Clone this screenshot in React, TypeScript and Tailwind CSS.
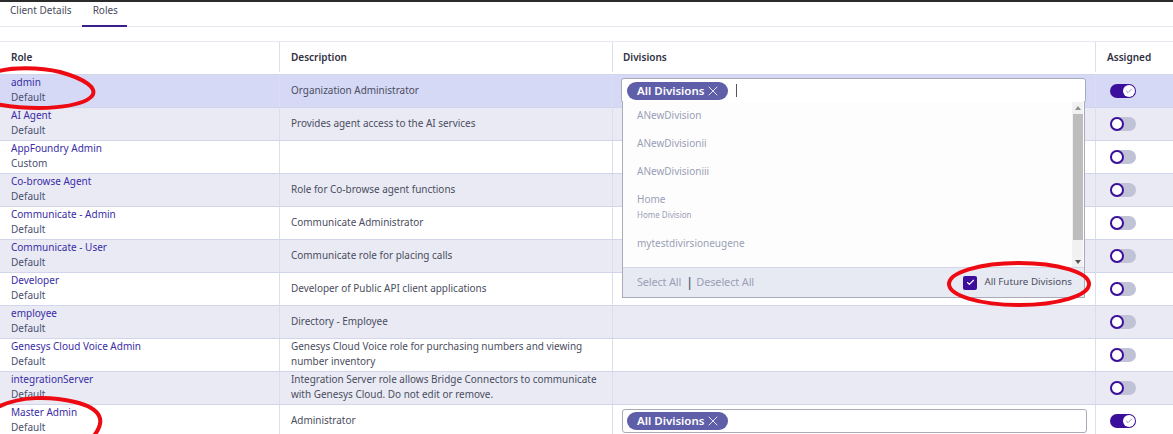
import { X, Check } from "lucide-react";

interface Role {
  name: string;
  type: string;
  description: string[];
  divisions?: boolean;
  assigned?: boolean;
}

const roles: Role[] = [
  { name: "admin", type: "Default", description: ["Organization Administrator"], assigned: true },
  { name: "AI Agent", type: "Default", description: ["Provides agent access to the AI services"] },
  { name: "AppFoundry Admin", type: "Custom", description: [] },
  { name: "Co-browse Agent", type: "Default", description: ["Role for Co-browse agent functions"] },
  { name: "Communicate - Admin", type: "Default", description: ["Communicate Administrator"] },
  { name: "Communicate - User", type: "Default", description: ["Communicate role for placing calls"] },
  { name: "Developer", type: "Default", description: ["Developer of Public API client applications"] },
  { name: "employee", type: "Default", description: ["Directory - Employee"] },
  {
    name: "Genesys Cloud Voice Admin",
    type: "Default",
    description: ["Genesys Cloud Voice role for purchasing numbers and viewing", "number inventory"],
  },
  {
    name: "integrationServer",
    type: "Default",
    description: ["Integration Server role allows Bridge Connectors to communicate", "with Genesys Cloud. Do not edit or remove."],
  },
  { name: "Master Admin", type: "Default", description: ["Administrator"], divisions: true, assigned: true },
];

const options = [
  { label: "ANewDivision", top: 6 },
  { label: "ANewDivisionii", top: 34 },
  { label: "ANewDivisioniii", top: 62 },
  { label: "Home", top: 90 },
  { label: "mytestdivirsioneugene", top: 134 },
];

const gridCols = "grid grid-cols-[280px_333px_483px_77px]";

function Chip() {
  return (
    <span className="flex h-[18px] w-[101px] items-center gap-px whitespace-nowrap rounded-full bg-[#5f5ea8] pl-[10px] text-[11.5px] font-semibold text-white">
      All Divisions
      <X size={16} strokeWidth={1.25} />
    </span>
  );
}

function Toggle({ on }: { on?: boolean }) {
  if (on) {
    return (
      <div className="flex h-[14px] w-[26px] items-center justify-end rounded-full bg-[#3b0f9c] pr-px">
        <div className="flex h-[12px] w-[12px] items-center justify-center rounded-full bg-white">
          <Check size={8} strokeWidth={2} className="text-[#5f5ea8]" />
        </div>
      </div>
    );
  }
  return (
    <div className="flex h-[14px] w-[26px] items-center rounded-full bg-[#c0c2d6]">
      <div className="h-[14px] w-[14px] rounded-full border-2 border-[#3b0f9c] bg-white" />
    </div>
  );
}

function RoleRow({ role, index }: { role: Role; index: number }) {
  const bg = index === 0 ? "bg-[#d5d9f6]" : index % 2 === 1 ? "bg-[#e9eaf4]" : "bg-white";
  return (
    <div className={`${gridCols} h-[33px] border-b border-[#d3d5ea] ${bg}`}>
      <div className="flex flex-col justify-center border-r border-[#dcdeee] pb-[2px] pl-[11px] leading-[15px]">
        <span className="text-[#3a2ca6]">{role.name}</span>
        <span className="text-[#4a5070]">{role.type}</span>
      </div>
      <div className="flex flex-col justify-center border-r border-[#dcdeee] pb-[2px] pl-[11px] text-[9.95px] leading-[15px] text-[#4a4d5e]">
        {role.description.map((line) => (
          <span key={line} className="whitespace-nowrap">{line}</span>
        ))}
      </div>
      <div className="flex items-center border-r border-[#dcdeee] pl-[9px]">
        {role.divisions && (
          <div className="flex h-[24px] w-[465px] items-center rounded-[3px] border border-[#a9abb8] bg-white pl-[4px]">
            <Chip />
          </div>
        )}
      </div>
      <div className="flex items-center pl-[14px]">
        <Toggle on={role.assigned} />
      </div>
    </div>
  );
}

export default function App() {
  return (
    <div className="relative h-[434px] w-[1173px] overflow-hidden bg-white font-['Noto_Sans',sans-serif] text-[10px]">
      <div className="h-[2px] bg-[#2b2b2b]" />
      <div className="flex h-[25px] items-start border-b border-[#e4e5ef] text-[10px] text-[#4a4d5e]">
        <div className="pl-[10px] pt-px">Client Details</div>
        <div className="ml-[10px] h-[25px] w-[45px] border-b-2 border-[#3b1d8f] pl-[11px] pt-px">Roles</div>
      </div>

      <div className="mt-[14px] border-t border-[#e8e9f2]">
        <div className={`${gridCols} h-[33px] border-b border-[#d3d5ea] pb-[2px] font-semibold text-[#2f3142]`}>
          <div className="flex items-center border-r border-[#dcdeee] pl-[11px]">Role</div>
          <div className="flex items-center border-r border-[#dcdeee] pl-[11px]">Description</div>
          <div className="flex items-center border-r border-[#dcdeee] pl-[10px]">Divisions</div>
          <div className="flex items-center pl-[11px]">Assigned</div>
        </div>
        {roles.map((role, i) => (
          <RoleRow key={role.name} role={role} index={i} />
        ))}
      </div>

      {/* open divisions dropdown */}
      <div className="absolute left-[621px] top-[78px] flex h-[25px] w-[465px] items-center rounded-[3px] border border-[#a9abb8] bg-white pl-[5px]">
        <Chip />
        <span className="ml-[8px] h-[13px] w-px bg-[#555]" />
      </div>
      <div className="absolute left-[622px] top-[102px] h-[196px] w-[463px] border border-t-0 border-[#a9abb8] bg-[#fdfdfd] text-[#9a9fb6]">
        {options.map((o) => (
          <div key={o.label} className="absolute left-[14px] leading-[15px]" style={{ top: o.top }}>
            {o.label}
          </div>
        ))}
        <div className="absolute left-[14px] top-[107px] text-[8px] leading-[12px]">Home Division</div>

        {/* scrollbar */}
        <div className="absolute right-px top-0 flex h-[165px] w-[11px] flex-col items-center bg-[#f1f1f1]">
          <div className="mt-[4px] h-0 w-0 border-x-[3px] border-b-[4px] border-x-transparent border-b-[#8f8f8f]" />
          <div className="mt-[4px] h-[126px] w-[10px] bg-[#bdbdbd]" />
          <div className="mt-auto mb-[3px] h-0 w-0 border-x-[3px] border-t-[4px] border-x-transparent border-t-[#555]" />
        </div>

        <div className="absolute inset-x-0 bottom-0 flex h-[30px] items-center border-t border-[#d3d5ea] bg-[#e8eaf3] pl-[14px] text-[11px]">
          <span className="tracking-[-0.2px]">Select All</span>
          <span className="ml-[5px] mr-[3px] text-[13px] font-semibold text-[#5f6480]">|</span>
          <span className="tracking-[-0.15px]">Deselect All</span>
          <div className="ml-auto mr-[12px] flex items-center gap-[7px] text-[9.8px] text-[#4a4d5e]">
            <div className="flex h-[14px] w-[14px] items-center justify-center rounded-[2px] bg-[#3b0f9c]">
              <Check size={9} strokeWidth={3} className="text-white" />
            </div>
            All Future Divisions
          </div>
        </div>
      </div>

      {/* red annotation circles */}
      <svg className="pointer-events-none absolute left-0 top-0" width="1173" height="434" fill="none" stroke="#ee0a12" strokeWidth="4">
        <path d="M-4 72 C10 67 40 67 60 72 C85 79 98 88 92 96 C82 107 40 112 -4 104" />
        <path d="M-2 407 C20 396 50 396 75 402 C100 408 108 420 92 438" />
        <ellipse cx="1019" cy="284" rx="70" ry="21" />
      </svg>
    </div>
  );
}
